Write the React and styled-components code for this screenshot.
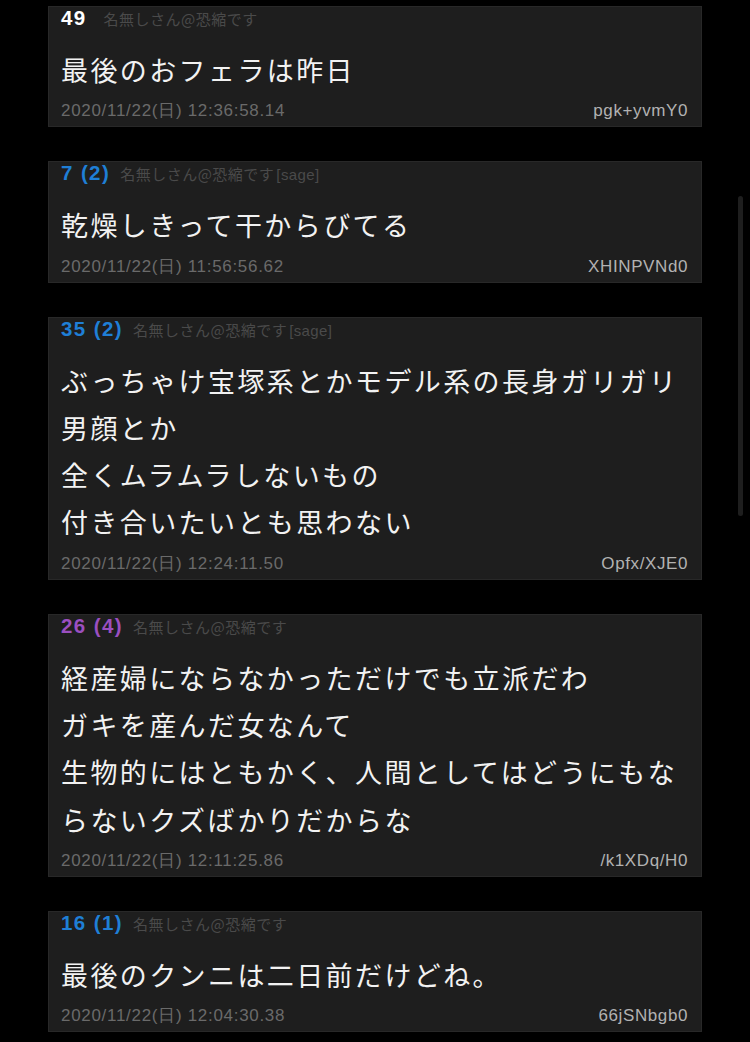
import React from "react";
import styled, { createGlobalStyle } from "styled-components";

const Global = createGlobalStyle`
  html, body { margin: 0; padding: 0; background: #000; }
  body { font-family: "Noto Sans CJK JP", "Noto Sans", sans-serif; }
`;

const Page = styled.div`
  position: relative;
  width: 750px;
  height: 1042px;
  overflow: hidden;
  background: #000;
  padding-top: 6px;
  box-sizing: border-box;
`;

const List = styled.div`
  display: flex;
  flex-direction: column;
  gap: 34px;
  margin-left: 48px;
  width: 654px;
`;

const Card = styled.article`
  background: #1e1e1e;
  border: 1px solid #282828;
  box-sizing: border-box;
  padding: 0 13px 4px 12px;
`;

const Header = styled.div`
  display: flex;
  align-items: baseline;
  height: 22px;
  line-height: 22px;
  white-space: nowrap;
`;

const Num = styled.span`
  font-family: "Liberation Sans", Arial, sans-serif;
  font-weight: 700;
  font-size: 20.5px;
  color: ${(p) => p.$color};
  letter-spacing: 1.4px;
`;

const Name = styled.span`
  margin-left: ${(p) => p.$gap}px;
  font-family: "Noto Sans CJK JP", sans-serif;
  font-size: 15px;
  letter-spacing: 0.5px;
  color: #4a4a4a;
`;

const Sage = styled.span`
  margin-left: 2px;
  font-family: "Liberation Sans", Arial, sans-serif;
  font-size: 15px;
  letter-spacing: 0.4px;
  color: #4a4a4a;
`;

const Body = styled.div`
  margin-top: 17px;
  font-family: "Noto Sans CJK JP", sans-serif;
  font-size: 27px;
  letter-spacing: 2.4px;
  line-height: 47.3px;
  color: #f2f2f2;
  white-space: nowrap;
`;

const Footer = styled.div`
  margin-top: 7px;
  display: flex;
  justify-content: space-between;
  align-items: center;
  line-height: 22px;
  font-family: "Liberation Sans", Arial, sans-serif;
  font-size: 17px;
  letter-spacing: 0.7px;
`;

const Date = styled.span`
  color: #6a6a6a;
`;

const Id = styled.span`
  color: #b2b2b2;
  letter-spacing: 0.6px;
`;

const Scrollbar = styled.div`
  position: absolute;
  left: 738px;
  top: 196px;
  width: 5px;
  height: 320px;
  border-radius: 3px;
  background: #1e1e1e;
`;

const posts = [
  {
    num: "49",
    color: "#ffffff",
    gap: 17,
    sage: false,
    lines: ["最後のおフェラは昨日"],
    date: "2020/11/22(日) 12:36:58.14",
    id: "pgk+yvmY0",
  },
  {
    num: "7 (2)",
    color: "#1f7fd6",
    gap: 10,
    sage: true,
    lines: ["乾燥しきって干からびてる"],
    date: "2020/11/22(日) 11:56:56.62",
    id: "XHINPVNd0",
  },
  {
    num: "35 (2)",
    color: "#1f7fd6",
    gap: 10,
    sage: true,
    lines: [
      "ぶっちゃけ宝塚系とかモデル系の長身ガリガリ",
      "男顔とか",
      "全くムラムラしないもの",
      "付き合いたいとも思わない",
    ],
    date: "2020/11/22(日) 12:24:11.50",
    id: "Opfx/XJE0",
  },
  {
    num: "26 (4)",
    color: "#9b4fc0",
    gap: 10,
    sage: false,
    lines: [
      "経産婦にならなかっただけでも立派だわ",
      "ガキを産んだ女なんて",
      "生物的にはともかく、人間としてはどうにもな",
      "らないクズばかりだからな",
    ],
    date: "2020/11/22(日) 12:11:25.86",
    id: "/k1XDq/H0",
  },
  {
    num: "16 (1)",
    color: "#1f7fd6",
    gap: 10,
    sage: false,
    lines: ["最後のクンニは二日前だけどね。"],
    date: "2020/11/22(日) 12:04:30.38",
    id: "66jSNbgb0",
  },
];

export default function App() {
  return (
    <Page>
      <Global />
      <List>
        {posts.map((p) => (
          <Card key={p.id}>
            <Header>
              <Num $color={p.color}>{p.num}</Num>
              <Name $gap={p.gap}>
                名無しさん@恐縮です{p.sage && <Sage>[sage]</Sage>}
              </Name>
            </Header>
            <Body>
              {p.lines.map((l, i) => (
                <div key={i}>{l}</div>
              ))}
            </Body>
            <Footer>
              <Date>{p.date}</Date>
              <Id>{p.id}</Id>
            </Footer>
          </Card>
        ))}
      </List>
      <Scrollbar />
    </Page>
  );
}
